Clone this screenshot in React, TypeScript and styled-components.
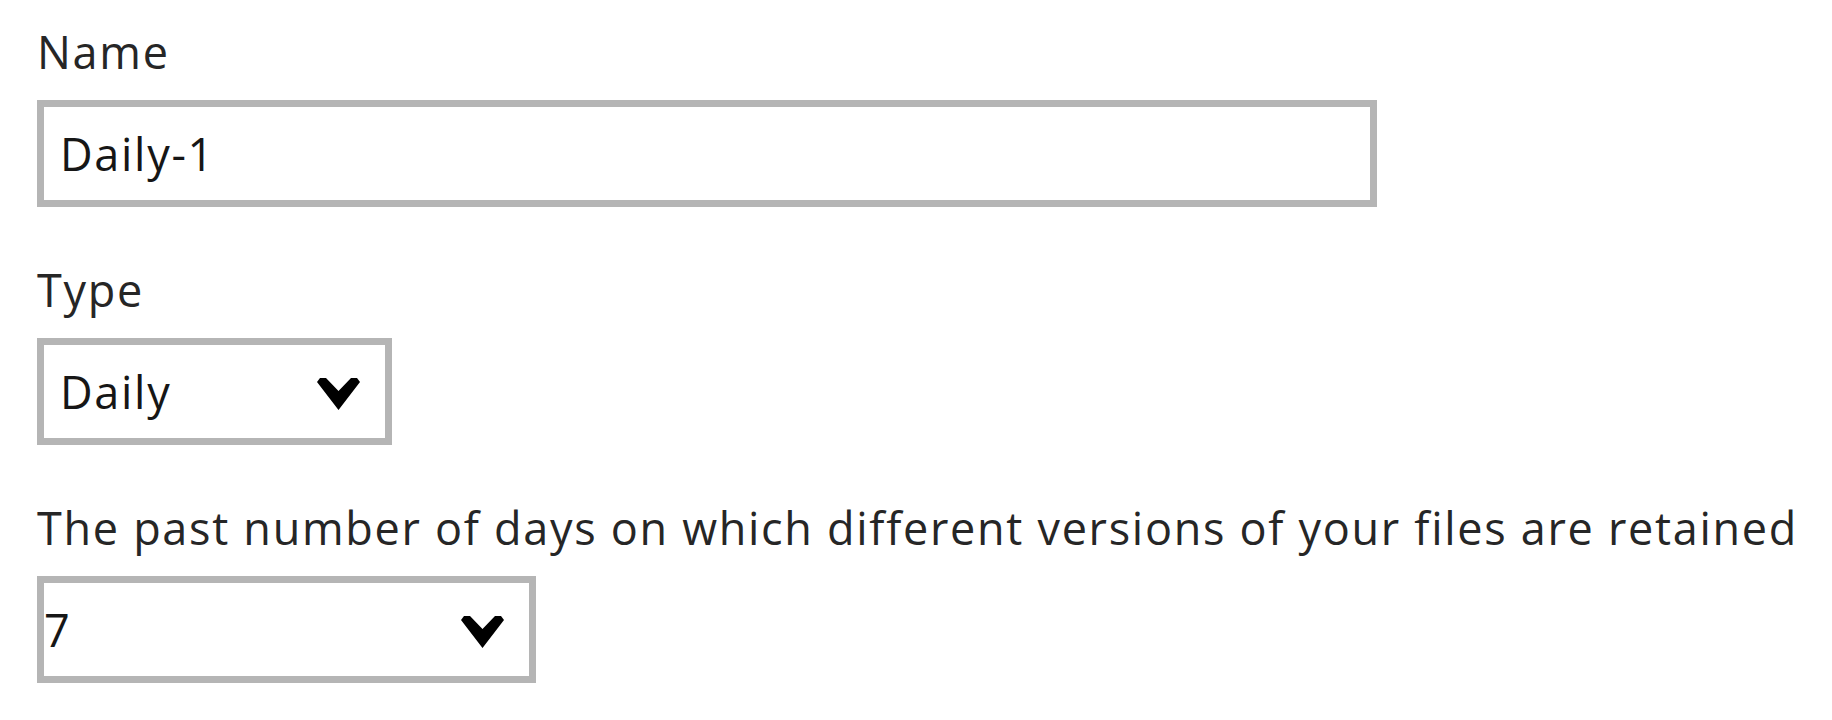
import React from 'react';
import styled, { createGlobalStyle } from 'styled-components';

const GlobalStyle = createGlobalStyle`
  html, body {
    margin: 0;
    padding: 0;
    background: #ffffff;
  }
  body {
    font-family: 'Open Sans', 'Noto Sans', sans-serif;
  }
`;

const Form = styled.form`
  display: flex;
  flex-direction: column;
  gap: 52px;
  padding: 21px 0 0 37px;
`;

const Field = styled.div`
  display: flex;
  flex-direction: column;
  gap: 18px;
`;

const Label = styled.label`
  font-size: 45px;
  line-height: 61px;
  letter-spacing: 1.7px;
  color: #262626;
  white-space: nowrap;
`;

const TextInput = styled.input`
  box-sizing: border-box;
  width: 1340px;
  height: 107px;
  border: 7px solid #b5b5b5;
  border-radius: 0;
  padding: 0 0 0 16px;
  margin: 0;
  font-family: 'Open Sans', 'Noto Sans', sans-serif;
  font-size: 45px;
  line-height: 61px;
  letter-spacing: 1.7px;
  color: #161616;
  background: #ffffff;
  outline: none;
`;

const SelectBox = styled.div<{ $width: number; $inset: number }>`
  box-sizing: border-box;
  width: ${p => p.$width}px;
  height: 107px;
  border: 7px solid #b5b5b5;
  display: flex;
  align-items: center;
  justify-content: space-between;
  padding: 0 25px 0 ${p => p.$inset}px;
  background: #ffffff;
  cursor: pointer;
`;

const SelectValue = styled.span`
  font-size: 45px;
  line-height: 61px;
  letter-spacing: 1.7px;
  color: #161616;
`;

const Chevron = styled.svg`
  width: 43px;
  height: 32px;
  flex: none;
  margin-top: 4px;
`;

const ChevronDown = () => (
  <Chevron viewBox="0 0 43 32">
    <polygon points="0,4 3,0 9,0 21.5,13 34,0 40,0 43,4 21.5,32" fill="#000000" />
  </Chevron>
);

const Select: React.FC<{ value: string; width: number; inset: number }> = ({ value, width, inset }) => (
  <SelectBox $width={width} $inset={inset}>
    <SelectValue>{value}</SelectValue>
    <ChevronDown />
  </SelectBox>
);

export default function App() {
  return (
    <>
      <GlobalStyle />
      <Form onSubmit={e => e.preventDefault()}>
        <Field>
          <Label htmlFor="policy-name">Name</Label>
          <TextInput id="policy-name" defaultValue="Daily-1" />
        </Field>
        <Field>
          <Label>Type</Label>
          <Select value="Daily" width={355} inset={16} />
        </Field>
        <Field>
          <Label>The past number of days on which different versions of your files are retained</Label>
          <Select value="7" width={499} inset={0} />
        </Field>
      </Form>
    </>
  );
}
